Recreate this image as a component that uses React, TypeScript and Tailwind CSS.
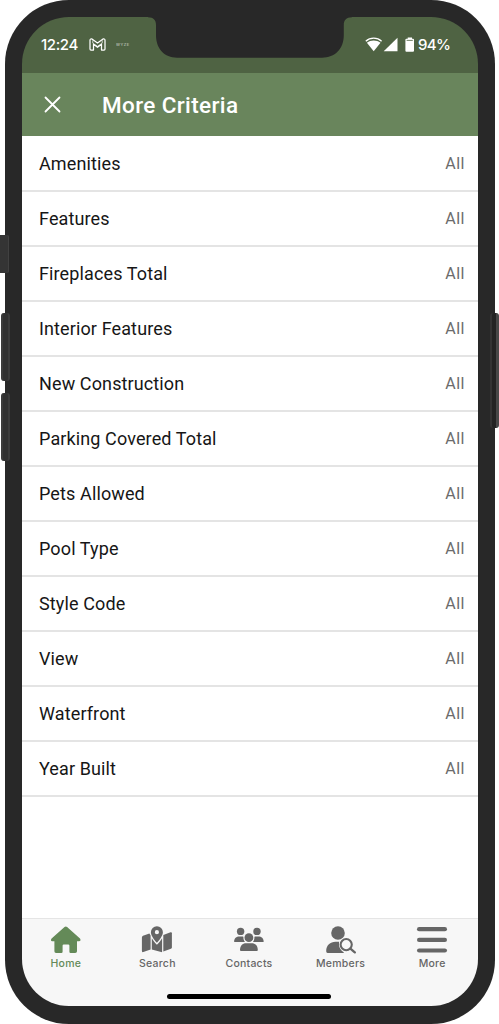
import type { ReactNode } from "react";

const criteria = [
  "Amenities",
  "Features",
  "Fireplaces Total",
  "Interior Features",
  "New Construction",
  "Parking Covered Total",
  "Pets Allowed",
  "Pool Type",
  "Style Code",
  "View",
  "Waterfront",
  "Year Built",
];

interface Tab {
  label: string;
  icon: ReactNode;
  active?: boolean;
}

const tabs: Tab[] = [
  {
    label: "Home",
    active: true,
    icon: (
      <path d="M14.5 0.9 Q15.8 0 17.1 0.9 L30 12.4 Q31.4 14.8 29 15.2 H27 V25.2 Q27 27 25.2 27 H20.6 Q19.4 27 19.4 25.8 V19.6 Q19.4 18.4 18.2 18.4 H13.8 Q12.6 18.4 12.6 19.6 V25.8 Q12.6 27 11.4 27 H6 Q4.4 27 4.4 25.2 V15.2 H2.2 Q0 14.6 1.6 12.4 Z" />
    ),
  },
  {
    label: "Search",
    icon: (
      <>
        <path fillRule="evenodd" d="M15.9 0.2 A6 6 0 0 1 21.9 6.2 C21.9 9.4 18.4 14.2 15.9 16.8 C13.4 14.2 9.9 9.4 9.9 6.2 A6 6 0 0 1 15.9 0.2 Z M15.9 4.1 A2.1 2.1 0 1 0 15.9 8.3 A2.1 2.1 0 1 0 15.9 4.1 Z" />
        <path d="M8.4 7.4 L2 9.8 Q0.9 10.3 0.9 11.4 V25 Q0.9 26.5 2.3 26 L9.6 23.4 V9.6 Z" />
        <path d="M10.8 12.2 C12.3 14.8 13.8 16.7 15.9 18.8 C18 16.7 19.6 14.8 21.1 12.2 V26.2 L10.8 23.4 Z" />
        <path d="M22.3 9 L29.5 6.3 Q30.9 5.9 30.9 7.3 V21.4 Q30.9 22.4 29.9 22.8 L22.3 25.6 Z" />
      </>
    ),
  },
  {
    label: "Contacts",
    icon: (
      <>
        <circle cx="7.6" cy="5.4" r="3.7" />
        <circle cx="24" cy="5.4" r="3.7" />
        <circle cx="15.9" cy="11.7" r="4.4" />
        <path d="M1.1 15.6 C1.1 12.1 3.4 10.4 6.4 10.4 H9.8 Q10.4 10.4 10.4 11 C10.3 13.2 10.9 14.8 12 16 H1.8 Q1.1 16.2 1.1 15.6 Z" />
        <path d="M30.7 15.6 C30.7 12.1 28.4 10.4 25.4 10.4 H22 Q21.4 10.4 21.4 11 C21.5 13.2 20.9 14.8 19.8 16 H30 Q30.7 16.2 30.7 15.6 Z" />
        <path d="M7 24 C7 19.7 9.5 17.2 13 17.2 H18.8 C22.3 17.2 24.8 19.7 24.8 24 Q24.8 25 23.8 25 H8 Q7 25 7 24 Z" />
      </>
    ),
  },
  {
    label: "Members",
    icon: (
      <>
        <circle cx="13" cy="7" r="6.8" />
        <path d="M1.2 25.3 C1.2 19.2 5.3 15.8 10.5 15.8 H14.2 C13.2 20.1 15.3 24.3 19 26.4 Q18.5 26.9 17.6 26.9 H2.6 Q1.2 26.9 1.2 25.3 Z" />
        <circle cx="21.2" cy="18.6" r="5.6" fill="none" stroke="currentColor" strokeWidth="2.1" />
        <path d="M25.4 22.6 L29.8 26.4" fill="none" stroke="currentColor" strokeWidth="2.3" strokeLinecap="round" />
      </>
    ),
  },
  {
    label: "More",
    icon: (
      <>
        <rect x="1" y="1.1" width="30" height="4.2" rx="2.1" />
        <rect x="1" y="11.8" width="30" height="4.2" rx="2.1" />
        <rect x="1" y="22.4" width="30" height="4.2" rx="2.1" />
      </>
    ),
  },
];

function StatusBar() {
  return (
    <div className="flex h-14 shrink-0 items-center justify-between bg-[#4f6343] pl-[19px] pr-[28px] text-white">
      <div className="flex items-center">
        <span className="w-[38px] whitespace-nowrap font-['Inter'] text-[15px] font-medium leading-5 tracking-[-0.4px]">12:24</span>
        <svg className="mb-px ml-[10px] h-[13px] w-[17px]" viewBox="0 0 17 13" fill="none" stroke="currentColor" strokeWidth="1.25" strokeLinejoin="round">
          <path d="M1 2.2 Q1 .7 2.6 .8 L8.5 5.1 L14.4 .8 Q16 .7 16 2.2 V11 Q16 12.1 15 12.1 H12.5 V6.2 L8.5 9.3 L4.5 6.2 V12.1 H2 Q1 12.1 1 11 Z" />
          <path d="M3.8 2.3 V5.2 L8.5 8.3 L13.2 5.2 V2.3" strokeWidth=".7" />
        </svg>
        <span className="ml-[10px] font-['Inter'] text-[4px] leading-none tracking-[0.5px] opacity-70">WYZE</span>
      </div>
      <div className="flex items-center">
        <svg className="mb-px h-[15px] w-[50px]" viewBox="0 0 50 15" fill="currentColor">
          <path d="M.8 4.2 C5.2 .2 12.2 .2 16.6 4.2" fill="none" stroke="currentColor" strokeWidth="1.3" />
          <path d="M1.9 5.7 C5.8 2.7 11.6 2.7 15.5 5.7 L8.7 14.3 Z" />
          <path d="M32.5 .8 V14.3 H18.7 Z" />
          <path d="M42.7 .5 H47 V1.8 H48 Q49 1.8 49 2.8 V13.7 Q49 14.7 48 14.7 H41.4 Q40.4 14.7 40.4 13.7 V2.8 Q40.4 1.8 41.4 1.8 H42.7 Z" />
          <path d="M41.6 3.4 H47.8" stroke="#4f6343" strokeWidth=".8" />
        </svg>
        <span className="ml-[3px] w-[32px] whitespace-nowrap font-['Inter'] text-[15px] font-medium leading-5 tracking-[-0.6px]">94%</span>
      </div>
    </div>
  );
}

// Phone bezel cut-out, with the small flares where it meets the top edge
function Notch() {
  return (
    <svg className="absolute left-[148px] top-[16px] h-[42px] w-[204px]" viewBox="0 0 204 42" fill="#282828">
      <path d="M0 0 H204 V1.3 C198 1.3 195.8 4.5 195.8 9 V19 C195.8 33 187 41.7 174 41.7 H29 C16.5 41.7 8 33 8 19 V9 C8 4.5 5.8 1.3 0 1.3 Z" />
    </svg>
  );
}

function SideButtons() {
  return (
    <>
      <div className="absolute left-0 top-[235px] h-[38px] w-[9px] rounded-r-[2px] border-r border-[#414141] bg-[#343434]" />
      <div className="absolute left-[1px] top-[313px] h-[68px] w-[9px] rounded-[3px] border-x-2 border-[#3b3b3b] bg-[#303030]" />
      <div className="absolute left-[1px] top-[393px] h-[68px] w-[9px] rounded-[3px] border-x-2 border-[#3b3b3b] bg-[#303030]" />
      <div className="absolute left-[490px] top-[313px] h-[115px] w-[9px] rounded-[3px] border-l-2 border-r-[3px] border-l-[#343434] border-r-[#484848] bg-[#242424]" />
    </>
  );
}

export default function App() {
  return (
    <div className="relative h-[1024px] w-[499px] overflow-hidden bg-white pl-[5px] font-['Roboto',sans-serif]">
      <div className="h-[1024px] w-[490px] rounded-[64px] bg-[#282828] px-[17px] pb-[18px] pt-[17px]">
        <div className="flex h-[989px] w-[456px] flex-col overflow-hidden rounded-[47px]">
          <StatusBar />

          <header className="flex h-[63px] shrink-0 items-center bg-[#69855c] text-white">
            <svg className="ml-[22px] h-[17px] w-[17px]" viewBox="0 0 17 17" fill="none" stroke="currentColor" strokeWidth="1.8" strokeLinecap="round">
              <path d="M1.5 1.5 L15.5 15.5 M15.5 1.5 L1.5 15.5" />
            </svg>
            <h1 className="ml-[41px] pt-px text-[22.5px] font-medium leading-7 tracking-[0.37px]">More Criteria</h1>
          </header>

          <ul className="flex-1 bg-white pt-px">
            {criteria.map((name) => (
              <li key={name} className="flex h-[55px] items-center justify-between border-b-2 border-[#e4e4e4] pl-[17px] pr-[13px]">
                <span className="text-[18px] tracking-[0.12px] text-[#161616]">{name}</span>
                <span className="text-[16px] tracking-[0.5px] text-[#6c6c6c]">All</span>
              </li>
            ))}
          </ul>

          <nav className="flex h-[88px] shrink-0 flex-col items-center justify-between border-t border-[#e5e5e5] bg-[#f7f7f7] pb-[7px] pr-[2px]">
            <div className="flex w-[458px] pt-[7px]">
              {tabs.map((tab) => (
                <div key={tab.label} className={`flex flex-1 flex-col items-center ${tab.active ? "text-[#648a58]" : "text-[#666666]"}`}>
                  <svg className="h-[28px] w-[32px]" viewBox="0 0 32 28" fill="currentColor">
                    {tab.icon}
                  </svg>
                  <span className="mt-[3px] font-['Inter'] text-[10.5px] font-medium leading-[14px] tracking-[0.24px]">{tab.label}</span>
                </div>
              ))}
            </div>
            <div className="h-[5px] w-[164px] rounded-full bg-black" />
          </nav>
        </div>
      </div>
      <Notch />
      <SideButtons />
    </div>
  );
}
